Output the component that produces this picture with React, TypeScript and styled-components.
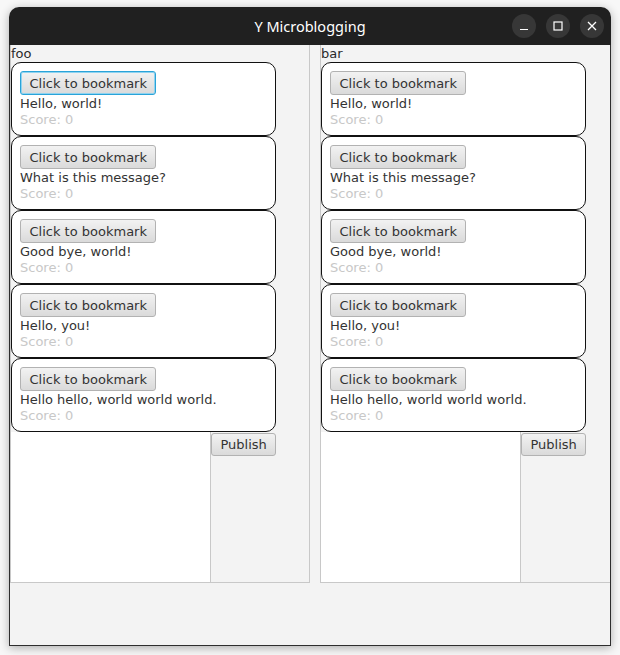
import React from 'react';
import styled, { createGlobalStyle } from 'styled-components';

const GlobalStyle = createGlobalStyle`
  html, body {
    margin: 0;
    padding: 0;
    background: #f7f7f7;
  }
`;

const Page = styled.div`
  width: 620px;
  height: 655px;
  padding: 7px 0 0 9px;
  box-sizing: border-box;
  overflow: hidden;
`;

const Window = styled.div`
  width: 602px;
  height: 639px;
  display: flex;
  flex-direction: column;
  border-radius: 10px 10px 0 0;
  box-shadow: 0 2px 10px rgba(0, 0, 0, 0.3);
  overflow: hidden;
`;

const TitleBar = styled.div`
  height: 38px;
  flex-shrink: 0;
  background: #202020;
  position: relative;
  display: flex;
  align-items: center;
  justify-content: center;
  color: #ffffff;
  font-family: "Noto Sans", "DejaVu Sans", sans-serif;
  font-size: 14.5px;
  font-weight: 400;
`;

const Controls = styled.div`
  position: absolute;
  right: 7px;
  top: 7px;
  display: flex;
  gap: 10px;
`;

const ControlButton = styled.div`
  width: 24px;
  height: 24px;
  border-radius: 50%;
  background: #373737;
  display: flex;
  align-items: center;
  justify-content: center;
`;

const Body = styled.div`
  flex: 1;
  background: #f3f3f3;
  border: 1px solid #2e2e2e;
  border-top: none;
  overflow: hidden;
`;

const Columns = styled.div`
  display: flex;
  gap: 10px;
  width: 620px;
`;

const Panel = styled.div`
  width: 300px;
  height: 538px;
  flex-shrink: 0;
  box-sizing: border-box;
  border: 1px solid #c8c8c8;
  border-top: none;
  display: flex;
  flex-direction: column;
  font-family: "DejaVu Sans", sans-serif;
  font-size: 13px;
  color: #333333;
`;

const UserLabel = styled.div`
  height: 17px;
  line-height: 17px;
  color: #2a2a2a;
`;

const Card = styled.div`
  width: 265px;
  height: 74px;
  box-sizing: border-box;
  border: 1px solid #111111;
  border-radius: 10px;
  background: #ffffff;
  padding: 8px 8px 7px;
  display: flex;
  flex-direction: column;
  align-items: flex-start;
`;

const Button = styled.button<{ $focused?: boolean }>`
  height: 24px;
  padding: 0 8.5px;
  box-sizing: border-box;
  font-family: "DejaVu Sans", sans-serif;
  font-size: 13px;
  color: #333333;
  background: linear-gradient(#f2f2f2, #dadada);
  border: 1px solid ${(p) => (p.$focused ? '#2aa3d8' : '#b2b2b2')};
  box-shadow: ${(p) => (p.$focused ? 'inset 0 0 0 1px #8fd3f0' : 'none')};
  border-radius: 3px;
  cursor: pointer;
`;

const Message = styled.div`
  margin-top: 1px;
  line-height: 16px;
  height: 16px;
  white-space: nowrap;
  color: #333333;
`;

const Score = styled.div`
  line-height: 16px;
  height: 16px;
  color: #c8c8c8;
`;

const Composer = styled.div`
  flex: 1;
  display: flex;
  align-items: flex-start;
`;

const TextArea = styled.textarea`
  width: 200px;
  height: 100%;
  box-sizing: border-box;
  border: none;
  border-right: 1px solid #c8c8c8;
  background: #ffffff;
  resize: none;
  outline: none;
  margin: 0;
`;

const PublishButton = styled(Button)`
  height: 23px;
  padding: 0 8.5px;
  margin-top: 1px;
`;

const messages = [
  'Hello, world!',
  'What is this message?',
  'Good bye, world!',
  'Hello, you!',
  'Hello hello, world world world.',
];

const UserColumn = ({ name, focusFirst }: { name: string; focusFirst?: boolean }) => (
  <Panel>
    <UserLabel>{name}</UserLabel>
    {messages.map((m, i) => (
      <Card key={i}>
        <Button $focused={focusFirst && i === 0}>Click to bookmark</Button>
        <Message>{m}</Message>
        <Score>Score: 0</Score>
      </Card>
    ))}
    <Composer>
      <TextArea />
      <PublishButton>Publish</PublishButton>
    </Composer>
  </Panel>
);

export default function App() {
  return (
    <>
      <GlobalStyle />
      <Page>
        <Window>
          <TitleBar>
            Y Microblogging
            <Controls>
              <ControlButton>
                <svg width="10" height="10" viewBox="0 0 10 10">
                  <line x1="1" y1="8.5" x2="9" y2="8.5" stroke="#fff" strokeWidth="1.2" />
                </svg>
              </ControlButton>
              <ControlButton>
                <svg width="10" height="10" viewBox="0 0 10 10">
                  <rect x="1" y="1" width="8" height="8" fill="none" stroke="#fff" strokeWidth="1.2" />
                </svg>
              </ControlButton>
              <ControlButton>
                <svg width="10" height="10" viewBox="0 0 10 10">
                  <path d="M1 1 L9 9 M9 1 L1 9" stroke="#fff" strokeWidth="1.3" />
                </svg>
              </ControlButton>
            </Controls>
          </TitleBar>
          <Body>
            <Columns>
              <UserColumn name="foo" focusFirst />
              <UserColumn name="bar" />
            </Columns>
          </Body>
        </Window>
      </Page>
    </>
  );
}
